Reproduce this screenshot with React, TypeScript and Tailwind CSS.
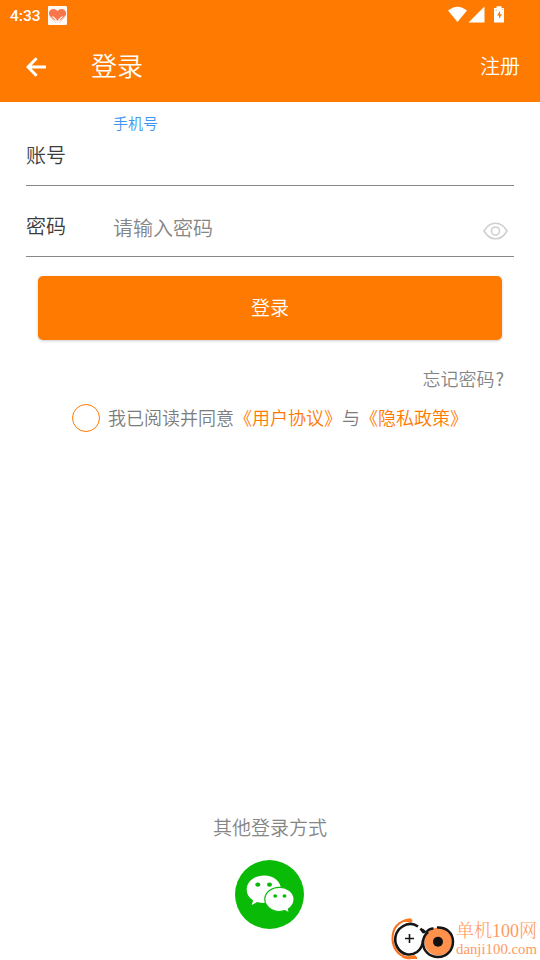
import React from 'react';

function StatusBar() {
  return (
    <div className="flex h-8 items-center justify-between pl-[10px] pr-[35px] text-white">
      <div className="flex items-center gap-[7px]">
        <span className="font-['Roboto',sans-serif] text-[15.5px] font-medium leading-8">4:33</span>
        <svg className="mb-px h-[19px] w-[19px]" viewBox="0 0 19 19">
          <rect width="19" height="19" rx="1" fill="#fffaf6" />
          <path d="M9.500 5.200C10.500 3.700 12 3 13.500 3c2.500 0 4.600 1.700 4.600 4.200 0 2.300-1.300 4-3.600 5.800l-3.500 1.500h-3L4.500 13C2.200 11.200.9 9.500.9 7.200.9 4.700 3 3 5.500 3c1.500 0 3 .7 4 2.200Z" fill="#f9764d" />
          <path d="m2.500 10.500 2 2.800L8 16.500M16.500 10.500l-2 2.800L11 16.500" fill="none" stroke="#f9cdb8" strokeWidth="1" />
          <path d="m4.500 10.500 3.300 2.800.7 2.700M14.500 10.500l-3.300 2.800-.7 2.700" fill="none" stroke="#fff6ee" strokeWidth="1.200" />
        </svg>
      </div>
      <svg className="mb-[2px] h-[18px] w-[57px]" viewBox="448 6 57 18" fill="#fff">
        <path d="M448 10.500Q457.500 2.800 467 10.500L457.500 22Z" />
        <path d="M468.500 22.500 484.500 6.500V22.500Z" />
        <path d="M494 8h2.500V6.300h5V8h2.500v14.600h-10Z" />
        <path d="m500 11-3 4.500h2V19l3-4.700h-2Z" fill="#ff7a00" />
        <path d="M495.500 9.500h1.300v1.300h-1.300ZM501.700 9h1v1h-1Z" fill="#ffae60" />
      </svg>
    </div>
  );
}

function Header() {
  return (
    <header className="h-[102px] bg-[#ff7a00] text-white">
      <StatusBar />
      <div className="flex h-[70px] items-center pl-[26px] pr-5">
        <svg className="h-5 w-[21px]" viewBox="0 0 21 20" fill="none" stroke="#fff" strokeWidth="3">
          <path d="M20 10H2.200M10.600 1.200 2 10l8.600 8.800" />
        </svg>
        <h1 className="mb-[5px] ml-11 text-[26px] leading-9">登录</h1>
        <span className="mb-[2px] ml-auto text-[20px] leading-7">注册</span>
      </div>
    </header>
  );
}

function EyeIcon() {
  return (
    <svg className="mr-[6px] mt-5 h-[18px] w-[25px]" viewBox="0 0 25 18" fill="none" stroke="#cfcfcf" strokeWidth="1.600">
      <path d="M1 9C4 3.800 8 1.200 12.500 1.200S21 3.800 24 9c-3 5.200-7 7.800-11.500 7.800S4 14.200 1 9Z" />
      <circle cx="12.500" cy="9" r="4" />
    </svg>
  );
}

function WeChatIcon() {
  return (
    <svg className="mr-[2px] h-[70px] w-[70px]" viewBox="0 0 70 70">
      <circle cx="35.500" cy="34.500" r="34.500" fill="#09bb07" />
      <g transform="translate(1 0)">
        <path d="M29 15.500c-9.700 0-17.300 6.100-17.300 14 0 4.500 2.400 8.300 6.400 10.900L16.700 45l5.600-3c2.200.7 4.400 1 6.700 1 9.700 0 17-6 17-13.700S38.700 15.500 29 15.500Z" fill="#fff" />
        <path d="M44.500 27.300c-8.200 0-14.700 5.300-14.700 12s6.500 12.200 14.700 12.200c1.800 0 3.600-.3 5.300-.8l4.600 2.300-1-4c3.500-2.300 5.700-5.700 5.700-9.700 0-6.700-6.400-12-14.600-12Z" fill="#fff" stroke="#09bb07" strokeWidth="1.200" />
        <g fill="#09bb07">
          <ellipse cx="22.800" cy="24.600" rx="2.500" ry="2.200" />
          <ellipse cx="34.500" cy="24.600" rx="2.500" ry="2.200" />
          <ellipse cx="40.200" cy="36" rx="2" ry="1.700" />
          <ellipse cx="49.500" cy="36" rx="2" ry="1.700" />
        </g>
      </g>
    </svg>
  );
}

function Watermark() {
  return (
    <div className="absolute bottom-0 right-[3px] flex h-[43px] items-center">
      <svg className="mr-px h-[43px] w-[65px]" viewBox="390 917 65 43" fill="none">
        <path d="M411 919.500c-13 1-19 9-18.500 20 .5 8 5 15 13.500 18l11 .5" stroke="#f66f1d" strokeWidth="2" />
        <path d="M402 921.500c3-3 8-4 10.500-1.500l-.5 2.500ZM402 956c5 1 9-1 13-.8l1.500 1.300c-3 3.500-9 3.500-14.500 1Z" fill="#ff7920" />
        <path d="M418 926.500c-5-3.500-11-3-15.500 0-8 5-9 14.500-5 21 4.500 7.500 13 9 19.500 4.500 4-3 6-7 6-12M420.500 928.500 424 933" stroke="#151515" strokeWidth="2.600" />
        <path d="M405 938.500h9M409.500 934v9" stroke="#151515" strokeWidth="1.600" />
        <circle cx="438.300" cy="941.500" r="14" fill="#ff914d" />
        <path d="M422 929.500 425.500 932.500M426.500 932c1.500-2 4-3.500 7-3.500M437 927.500c10-.5 16 6 16 14 0 9-6.500 15.500-15 15.500s-15-6-15-14.500c0-4.500 2-8 5-10.500" stroke="#151515" strokeWidth="2.500" />
        <circle cx="438" cy="941.800" r="5" fill="#111" />
      </svg>
      <div className="flex flex-col font-['Liberation_Serif','Noto_Serif_CJK_SC','Noto_Sans_CJK_SC',serif] text-[#ff9a62]">
        <span className="mt-px text-[18px] leading-[20px]">单机100网</span>
        <span className="text-[14.800px] leading-[17px]">danji100.com</span>
      </div>
    </div>
  );
}

export default function App() {
  return (
    <main className="relative flex h-[960px] w-[540px] flex-col overflow-hidden bg-white font-['Noto_Sans_CJK_SC',sans-serif] font-[350] text-[#858585]">
      <Header />
      <section className="px-[26px]">
        <div className="flex h-[84px] border-b border-[#888]">
          <label className="w-[87px] pt-[39px] text-[20px] leading-7 text-[#3c3c3c]">账号</label>
          <span className="pt-[11px] text-[15px] leading-5 text-[#3f95f5]">手机号</span>
        </div>
        <div className="flex h-[71px] items-center border-b border-[#888]">
          <label className="w-[87px] pt-[10px] text-[20px] leading-7 text-[#3c3c3c]">密码</label>
          <span className="grow pt-[13px] text-[20px] leading-7">请输入密码</span>
          <EyeIcon />
        </div>
      </section>
      <button className="mx-[38px] mt-[19px] h-16 rounded-[5px] bg-[#ff7a00] pb-[2px] text-[19px] font-[350] text-white shadow-[0_1px_3px_rgba(0,0,0,0.2)]">登录</button>
      <div className="mt-[26px] h-6 pr-9 text-right text-[18px] leading-6">忘记密码<span className="ml-px font-normal">?</span></div>
      <div className="mt-3 flex h-8 items-center pl-[72px]">
        <span className="h-7 w-7 rounded-full border border-[#ff7a00]" />
        <p className="mb-[2px] ml-2 text-[18px] leading-7 text-[#7c7c7c]">我已阅读并同意<span className="text-[#ff7a00]">《用户协议》</span>与<span className="text-[#ff7a00]">《隐私政策》</span></p>
      </div>
      <footer className="mb-[30px] mt-auto flex flex-col items-center">
        <p className="mb-[19px] text-[19px] leading-7">其他登录方式</p>
        <WeChatIcon />
      </footer>
      <Watermark />
    </main>
  );
}
